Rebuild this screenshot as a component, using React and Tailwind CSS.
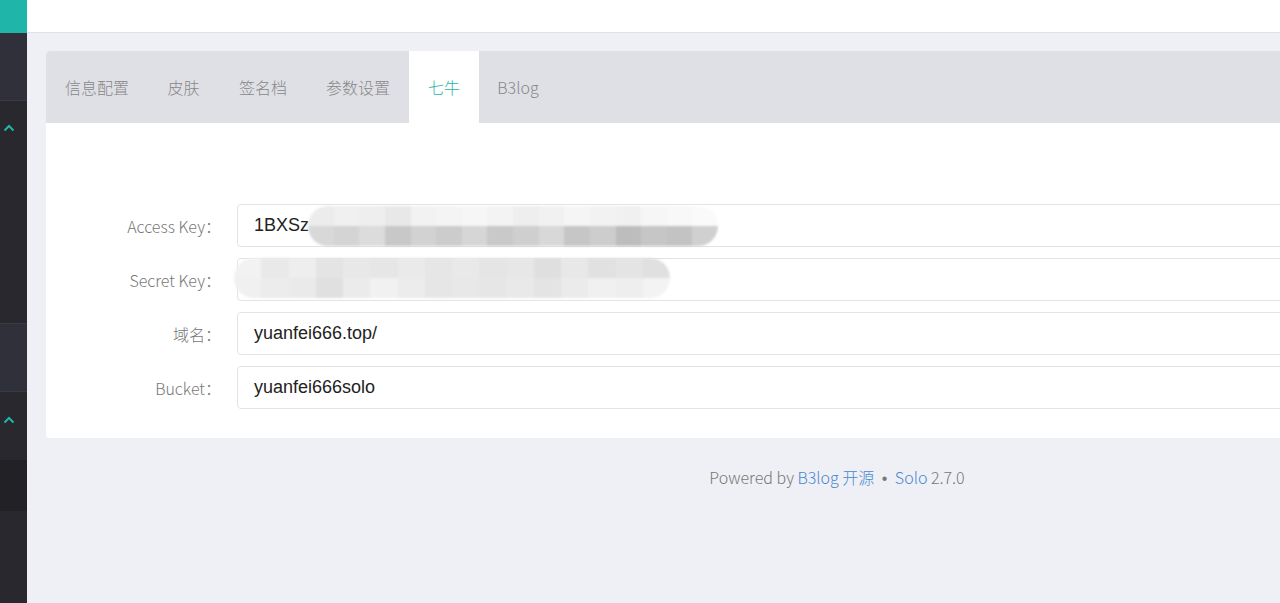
import React from 'react'

const tabs = [
  { label: '信息配置', w: 'w-[102px]' },
  { label: '皮肤', w: 'w-[71px]' },
  { label: '签名档', w: 'w-[88px]' },
  { label: '参数设置', w: 'w-[102px]' },
  { label: '七牛', w: 'w-[70px]' },
  { label: 'B3log', w: 'w-[78px]' },
]
const active = '七牛'

const Chevron = () => (
  <svg width="12" height="8" viewBox="0 0 12 8" className="ml-[3px]">
    <path d="M1.5 6.5 L6 2 L10.5 6.5" fill="none" stroke="#1fb5a8" strokeWidth="2" />
  </svg>
)

// pixelated blur patch used to hide the keys
const Mosaic = ({ cells, className }) => (
  <div className={`flex flex-col overflow-hidden rounded-full blur-[1px] ${className}`}>
    {cells.map((row, i) => (
      <div key={i} className="flex flex-1">
        {row.map((c, j) => (
          <div key={j} className="h-full flex-1" style={{ background: c }} />
        ))}
      </div>
    ))}
  </div>
)

const accessCells = [
  ['#ececec', '#f0f0f0', '#eeeeee', '#e8e8e8', '#f2f2f2', '#f4f4f4', '#f6f6f6', '#f3f3f3', '#eeeeee', '#f1f1f1', '#f5f5f5', '#f2f2f2', '#f0f0f0', '#f6f6f6', '#f8f8f8', '#fafafa'],
  ['#d8d8d8', '#d4d4d4', '#dcdcdc', '#c8c8c8', '#d2d2d2', '#cccccc', '#d6d6d6', '#c9c9c9', '#cfcfcf', '#d8d8d8', '#c6c6c6', '#cdcdcd', '#bdbdbd', '#c6c6c6', '#c3c3c3', '#d0d0d0'],
]

const secretCells = [
  ['#f2f2f2', '#e9e9e9', '#eeeeee', '#e4e4e4', '#e8e8e8', '#e6e6e6', '#eaeaea', '#e6e6e6', '#e9e9e9', '#e5e5e5', '#e7e7e7', '#dfdfdf', '#e8e8e8', '#e1e1e1', '#e4e4e4', '#e0e0e0'],
  ['#f0f0f0', '#ececec', '#eaeaea', '#e0e0e0', '#ebebeb', '#f1f1f1', '#ececec', '#e6e6e6', '#e8e8e8', '#e6e6e6', '#e9e9e9', '#e4e4e4', '#ebebeb', '#f0f0f0', '#eeeeee', '#f3f3f3'],
]

const Field = ({ label, children }) => (
  <div className="flex items-center">
    <label className="w-[191px] shrink-0 pr-[16px] text-right text-[16px] font-light text-[#777]">{label}</label>
    <div className="relative flex h-[43px] flex-1 items-center rounded-[4px] border border-[#e3e3e6] bg-white pl-[16px] font-['Liberation_Sans',Arial,sans-serif] text-[18px] text-[#222]">
      {children}
    </div>
  </div>
)

export default function App() {
  return (
    <div className="flex h-[603px] w-[1280px] overflow-hidden bg-[#eff0f5] font-['Noto_Sans_CJK_SC',sans-serif]">
      {/* sidebar */}
      <aside className="flex w-[27px] shrink-0 flex-col bg-[#28282e]">
        <div className="h-[33px] bg-[#1fb5a8]" />
        <div className="h-[68px] border-b border-[#3a3a42] bg-[#30303a]" />
        <div className="flex h-[222px] flex-col pt-[23px]">
          <Chevron />
        </div>
        <div className="h-[69px] border-y border-[#3a3a42] bg-[#30303a]" />
        <div className="flex h-[68px] flex-col pt-[24px]">
          <Chevron />
        </div>
        <div className="h-[51px] bg-[#212126]" />
        <div className="flex-1" />
      </aside>

      <div className="flex min-w-0 flex-1 flex-col">
        <header className="h-[33px] shrink-0 border-b border-[#e2e3e8] bg-white" />

        <main className="ml-[19px] w-[1582px] pt-[18px]">
          <div className="overflow-hidden rounded-[4px] bg-white">
            <nav className="flex h-[72px] bg-[#dfe0e5]">
              {tabs.map(t => (
                <div
                  key={t.label}
                  className={`flex items-center justify-center text-[16px] font-light ${t.w} ${t.label === active ? 'bg-white text-[#1fb5a8]' : 'text-[#888]'}`}
                >
                  {t.label}
                </div>
              ))}
            </nav>

            <div className="flex flex-col gap-[11px] pb-[29px] pt-[81px]">
              <Field label="Access Key：">
                <span>1BXSz</span>
                <Mosaic cells={accessCells} className="absolute left-[70px] top-[1px] h-[40px] w-[410px]" />
              </Field>
              <Field label="Secret Key：">
                <Mosaic cells={secretCells} className="absolute left-[-4px] top-[-1px] h-[40px] w-[436px]" />
              </Field>
              <Field label="域名：">yuanfei666.top/</Field>
              <Field label="Bucket：">yuanfei666solo</Field>
            </div>
          </div>

          <footer className="pt-[27px] text-center text-[16px] font-light text-[#777]">
            Powered by <span className="text-[#4a88cf]">B3log 开源</span>
            <span className="mx-[3px] font-['Liberation_Sans',sans-serif]"> • </span>
            <span className="text-[#4a88cf]">Solo</span> 2.7.0
          </footer>
        </main>
      </div>
    </div>
  )
}
